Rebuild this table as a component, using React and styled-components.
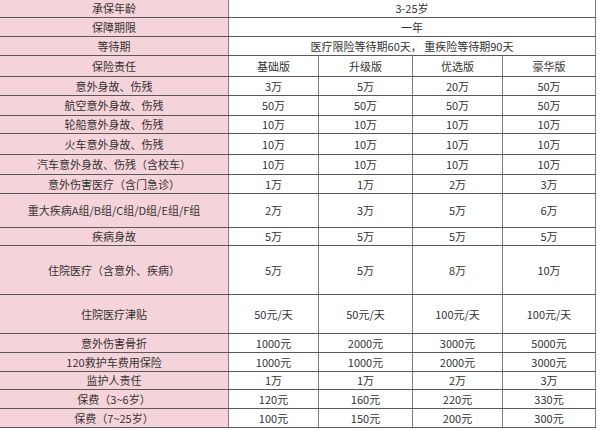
import React from 'react';
import styled, { createGlobalStyle } from 'styled-components';

const GlobalStyle = createGlobalStyle`
  html, body {
    margin: 0;
    padding: 0;
    background: #ffffff;
  }
  body {
    font-family: "Noto Sans CJK SC", "Noto Sans", sans-serif;
  }
`;

const info = [
  { label: '承保年龄', value: '3-25岁', h: 18 },
  { label: '保障期限', value: '一年', h: 19 },
  { label: '等待期', value: '医疗限险等待期60天， 重疾险等待期90天', h: 19 },
];

const plans = ['基础版', '升级版', '优选版', '豪华版'];

const rows = [
  { label: '意外身故、伤残', values: ['3万', '5万', '20万', '50万'], h: 19 },
  { label: '航空意外身故、伤残', values: ['50万', '50万', '50万', '50万'], h: 20 },
  { label: '轮船意外身故、伤残', values: ['10万', '10万', '10万', '10万'], h: 18 },
  { label: '火车意外身故、伤残', values: ['10万', '10万', '10万', '10万'], h: 21 },
  { label: '汽车意外身故、伤残（含校车）', values: ['10万', '10万', '10万', '10万'], h: 20 },
  { label: '意外伤害医疗（含门急诊）', values: ['1万', '1万', '2万', '3万'], h: 19 },
  { label: '重大疾病A组/B组/C组/D组/E组/F组', values: ['2万', '3万', '5万', '6万'], h: 34 },
  { label: '疾病身故', values: ['5万', '5万', '5万', '5万'], h: 18 },
  { label: '住院医疗（含意外、疾病）', values: ['5万', '5万', '8万', '10万'], h: 49 },
  { label: '住院医疗津贴', values: ['50元/天', '50元/天', '100元/天', '100元/天'], h: 39 },
  { label: '意外伤害骨折', values: ['1000元', '2000元', '3000元', '5000元'], h: 19 },
  { label: '120救护车费用保险', values: ['1000元', '1000元', '2000元', '3000元'], h: 19 },
  { label: '监护人责任', values: ['1万', '1万', '2万', '3万'], h: 18 },
  { label: '保费（3~6岁）', values: ['120元', '160元', '220元', '330元'], h: 19 },
  { label: '保费（7~25岁）', values: ['100元', '150元', '200元', '300元'], h: 19 },
];

const PlanTable = () => (
  <Table>
    {info.map((r) => (
      <Row key={r.label} $h={r.h}>
        <LabelCell>{r.label}</LabelCell>
        <ValueCell $span={4}>{r.value}</ValueCell>
      </Row>
    ))}
    <Row $h={21}>
      <LabelCell>保险责任</LabelCell>
      {plans.map((p) => (
        <ValueCell key={p}>{p}</ValueCell>
      ))}
    </Row>
    {rows.map((r) => (
      <Row key={r.label} $h={r.h}>
        <LabelCell>{r.label}</LabelCell>
        {r.values.map((v, i) => (
          <ValueCell key={i}>{v}</ValueCell>
        ))}
      </Row>
    ))}
  </Table>
);

export default function App() {
  return (
    <>
      <GlobalStyle />
      <PlanTable />
    </>
  );
}

const Table = styled.div`
  width: 596px;
  display: flex;
  flex-direction: column;
  color: #333333;
  font-size: 11px;
`;

const Row = styled.div`
  display: grid;
  grid-template-columns: 229px 90px 94px 90px 93px;
  height: ${({ $h }) => $h}px;
  box-sizing: border-box;
  border-bottom: 1px solid #5a5a5a;
`;

const Cell = styled.div`
  display: flex;
  align-items: center;
  justify-content: center;
  box-sizing: border-box;
  border-right: 1px solid #7d7d7d;
  white-space: nowrap;
  line-height: 1;
`;

const LabelCell = styled(Cell)`
  background: #f5d3da;
  border-right-color: #8a7a7e;
`;

const ValueCell = styled(Cell)`
  background: #ffffff;
  grid-column: span ${({ $span }) => $span || 1};
`;
